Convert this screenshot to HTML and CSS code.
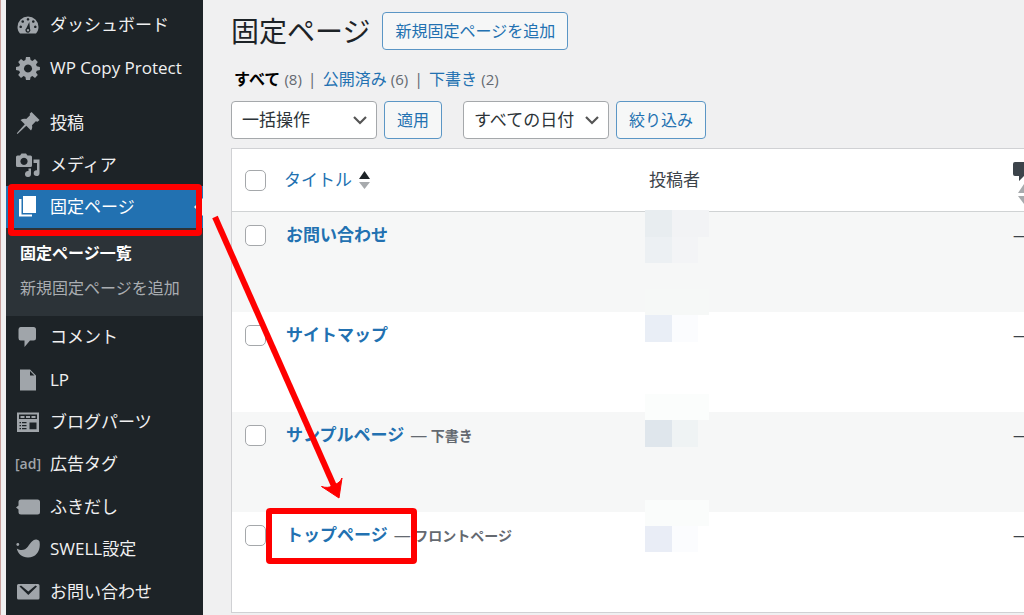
FILE: index.html
```html
<!DOCTYPE html>
<html lang="ja">
<head>
<meta charset="utf-8">
<title>固定ページ</title>
<link rel="stylesheet" href="styles.css">
</head>
<body>
<div class="app">
  <nav class="sidebar" aria-label="メインメニュー">
    <ul class="menu menu-top">
      <li><a class="item" href="#"><svg class="icon" viewBox="0 0 24 24"><path fill-rule="evenodd" d="M4 20.500C2.300 18.500 1.500 16.500 1.500 14A10.500 10.500 0 0 1 22.500 14C22.500 16.500 21.700 18.500 20 20.500ZM12 5a1.300 1.300 0 1 0 .01 0ZM6.700 7.200a1.300 1.300 0 1 0 .01 0ZM17.300 7.200a1.300 1.300 0 1 0 .01 0ZM4.700 12.500a1.300 1.300 0 1 0 .01 0ZM19.300 12.500a1.300 1.300 0 1 0 .01 0ZM13.300 9L10.300 15.200a2.500 2.500 0 1 0 3.700 .6ZM12 16a1.200 1.200 0 1 1-.01 0Z"/></svg>ダッシュボード</a></li>
      <li><a class="item" href="#"><svg class="icon" viewBox="0 0 24 24"><path fill-rule="evenodd" d="M10 1h4l.6 3.100 1.800.8 2.600-1.800L21.800 6l-1.800 2.600.8 1.700 3.100.6v3.200l-3.100.6-.8 1.800 1.800 2.600-2.800 2.800-2.600-1.800-1.800.8L14 24h-4l-.6-3.100-1.800-.8L5 21.900l-2.800-2.800L4 16.500l-.8-1.800L0 14.100v-3.200l3.200-.6.8-1.700L2.200 6 5 3.100l2.600 1.800 1.800-.8ZM12 8.500a4 4 0 1 0 .01 0Z"/></svg>WP Copy Protect</a></li>
    </ul>
    <ul class="menu menu-content">
      <li><a class="item" href="#"><svg class="icon" viewBox="0 0 24 24"><path d="M15.500 1L23.500 9 21.500 10.700 19.800 10.300 16 14.200C16.500 16.200 16.200 17.800 15 19.500L10.300 14.800 1.500 23 .8 22.300 8.800 13.300 4.500 9C6.500 7.800 8.200 7.600 10.200 8L14 4.300 13.700 2.800Z"/></svg>投稿</a></li>
      <li><a class="item" href="#"><svg class="icon" viewBox="0 0 24 24"><path fill-rule="evenodd" d="M1.500 2.500H4L5.500.5H10L11.500 2.500H14.500Q16 2.500 16 4V12.500Q16 14 14.500 14H1.500Q0 14 0 12.500V4Q0 2.500 1.500 2.500ZM8 4.800a3.600 3.600 0 1 0 .01 0Z"/><path d="M17.500 6.500H23.500V20A2.900 2.900 0 1 1 21 17.200V10H17.500ZM15 15.500V21A3 3 0 1 1 12.500 18V15.500Z"/></svg>メディア</a></li>
      <li class="current"><a class="item" href="#" aria-current="page"><svg class="icon" viewBox="0 0 24 24"><path d="M7 1H20V18H7Z"/><path d="M3 4H5.500V19.500H16V21.500H3Z"/></svg>固定ページ</a></li>
    </ul>
    <ul class="submenu">
      <li><a class="subitem active" href="#">固定ページ一覧</a></li>
      <li><a class="subitem" href="#">新規固定ページを追加</a></li>
    </ul>
    <ul class="menu menu-rest">
      <li><a class="item" href="#"><svg class="icon" viewBox="0 0 24 24"><path d="M4.500 2H17.500Q20 2 20 4.500V13Q20 15.500 17.500 15.500H14L8.500 22V15.500H4.500Q2.500 15.500 2.500 13V4.500Q2.500 2 4.500 2Z"/></svg>コメント</a></li>
      <li><a class="item" href="#"><svg class="icon" viewBox="0 0 24 24"><path fill-rule="evenodd" d="M4 1.500H14L20 7.500V22.500H4ZM14 3V7.500H18.500Z"/></svg>LP</a></li>
      <li><a class="item" href="#"><svg class="icon" viewBox="0 0 24 24"><path fill-rule="evenodd" d="M1 2.500H23V22H1ZM3 4.500V9H21V4.500ZM3.500 12V13.300H10.500V12ZM3.500 15V16.300H10.500V15ZM3.500 18V19.300H10.500V18ZM13.500 12.500V19.300H20.500V12.500Z"/><path d="M4.500 6H8.500V8H4.500ZM10 6H14V8H10ZM15.500 6H19.500V8H15.500ZM5 12H6V20H5Z"/></svg>ブログパーツ</a></li>
      <li><a class="item" href="#"><span class="icon icon-text">[ad]</span>広告タグ</a></li>
      <li><a class="item" href="#"><svg class="icon" viewBox="0 0 24 24"><path d="M5 4.500H21.500Q24 4.500 24 7V17Q24 19.500 21.500 19.500H5Q2.500 19.500 2.500 17V14.500L0 12.500 2.500 10.500V7Q2.500 4.500 5 4.500Z"/></svg>ふきだし</a></li>
      <li><a class="item" href="#"><svg class="icon" viewBox="0 0 24 24"><path d="M23.500 4.500C25 13 20.500 20.500 12 20.500C6 20.500 2 17 .8 11.500C5 14 9 13.500 12 9.500C15 5 17.500 2 20.500 2.500Q23 3 23.500 4.500Z"/><circle cx="1.800" cy="7.500" r="1.400"/></svg>SWELL設定</a></li>
      <li><a class="item" href="#"><svg class="icon" viewBox="0 0 24 24"><path fill-rule="evenodd" d="M2.500 4H22Q23.500 4 23.500 5.500V18Q23.500 19.500 22 19.500H2.500Q1 19.500 1 18V5.500Q1 4 2.500 4ZM3.500 6.500L12.300 15 21 6.500 19.500 5.500 12.300 11.500 5 5.500Z"/></svg>お問い合わせ</a></li>
    </ul>
  </nav>

  <main class="content">
    <header class="heading">
      <h1>固定ページ</h1>
      <a class="button" href="#">新規固定ページを追加</a>
    </header>
    <ul class="filters">
      <li><a class="all" href="#">すべて</a> <span class="count">(8)</span></li>
      <li><a href="#">公開済み</a> <span class="count">(6)</span></li>
      <li><a href="#">下書き</a> <span class="count">(2)</span></li>
    </ul>
    <form class="actions">
      <select aria-label="一括操作"><option>一括操作</option></select>
      <button class="button" type="button">適用</button>
      <select class="dates" aria-label="日付で絞り込む"><option>すべての日付</option></select>
      <button class="button" type="button">絞り込み</button>
    </form>
    <table class="pages">
      <colgroup><col class="col-check"><col class="col-title"><col><col class="col-comments"></colgroup>
      <thead>
        <tr>
          <th><input type="checkbox" aria-label="すべて選択"></th>
          <th><a class="sort" href="#">タイトル<svg class="sorter" viewBox="0 0 11 18"><path class="up" d="M5.500 0L11 8H0Z"/><path class="down" d="M0 11H11L5.500 18Z"/></svg></a></th>
          <th>投稿者</th>
          <th><svg class="bubble" viewBox="0 0 22 42" role="img" aria-label="コメント"><path class="talk" d="M2 0H20V14H11L6 19V14H2Q0 14 0 12V2Q0 0 2 0Z"/><path class="down" d="M11 22L17 31H5ZM5 34H17L11 42Z"/></svg></th>
        </tr>
      </thead>
      <tbody>
        <tr>
          <td><input type="checkbox" aria-label="お問い合わせを選択"></td>
          <td><a class="title" href="#">お問い合わせ</a></td>
          <td><svg class="mosaic" viewBox="0 0 64 106"><path fill="#e8edf0" d="M0 0H27V27H0Z"/><path fill="#f2f3f5" d="M27 0H64V27H27Z"/><path fill="#ecf0f3" d="M0 27H27V53H0Z"/><path fill="#f3f4f6" d="M27 27H53V53H27Z"/><path fill="#f6f8f7" d="M0 79H64V105H0Z"/></svg></td>
          <td>—</td>
        </tr>
        <tr>
          <td><input type="checkbox" aria-label="サイトマップを選択"></td>
          <td><a class="title" href="#">サイトマップ</a></td>
          <td><svg class="mosaic" viewBox="0 0 64 106"><path fill="#e9eef6" d="M0 3H27V30H0Z"/><path fill="#fbfcfe" d="M27 3H53V30H27Z"/><path fill="#fbfdfc" d="M0 82H64V106H0Z"/></svg></td>
          <td>—</td>
        </tr>
        <tr>
          <td><input type="checkbox" aria-label="サンプルページを選択"></td>
          <td><a class="title" href="#">サンプルページ</a><span class="state"><span class="dash">—</span> 下書き</span></td>
          <td><svg class="mosaic" viewBox="0 0 64 106"><path fill="#fbfdfc" d="M0 0H64V8H0Z"/><path fill="#dfe6ec" d="M0 8H27V35H0Z"/><path fill="#eff3f4" d="M27 8H53V35H27Z"/><path fill="#fafcfb" d="M0 88H64V106H0Z"/></svg></td>
          <td>—</td>
        </tr>
        <tr>
          <td><input type="checkbox" aria-label="トップページを選択"></td>
          <td><a class="title" href="#">トップページ</a><span class="state"><span class="dash">—</span> フロントページ</span></td>
          <td><svg class="mosaic" viewBox="0 0 64 106"><path fill="#fafcfb" d="M0 0H64V14H0Z"/><path fill="#e9edf6" d="M0 14H27V40H0Z"/><path fill="#fbfcfe" d="M27 14H53V40H27Z"/></svg></td>
          <td>—</td>
        </tr>
      </tbody>
    </table>
  </main>
  <svg class="annotations" width="430" height="580" viewBox="0 0 430 580" aria-hidden="true">
    <rect x="11" y="187" width="188" height="46" rx="1"/>
    <rect x="269" y="511" width="145" height="50" rx="1"/>
    <path d="M215 217L334 486"/>
    <path class="head" d="M339 498L321.500 486.500Q328 488.500 332 486L338 483Q341 481 342 478Z"/>
  </svg>
</div>
</body>
</html>
```
FILE: styles.css
```css
* { box-sizing: border-box; }
body {
  margin: 0;
  background: #f0f0f1;
  color: #3c434a;
  font: 16px/24px "Open Sans", "Noto Sans CJK JP", sans-serif;
}
ul, h1 { margin: 0; padding: 0; list-style: none; }
a { color: #2271b1; text-decoration: none; }

.app {
  position: relative;
  display: flex;
  height: 100vh;
  overflow: hidden;
  border-left: 1px solid #c9a09c;
}

/* Sidebar */
.sidebar {
  display: flex;
  flex-direction: column;
  flex: none;
  width: 197px;
  margin-left: 5px;
  background: #1d2327;
}
.menu-top { padding: 3px 0 12px; }
.menu-top .item { height: 43px; }
.item {
  display: flex;
  align-items: center;
  gap: 10px;
  height: 42px;
  padding-left: 10px;
  color: #f0f0f1;
  font-size: 17px;
  white-space: nowrap;
}
.icon { flex: none; width: 24px; height: 24px; fill: #a0a5aa; }
.icon-text {
  display: flex;
  align-items: center;
  justify-content: center;
  color: #a0a5aa;
  font-size: 14px;
  font-weight: 600;
}
.current { position: relative; background: #2271b1; }
.current .item { color: #fff; }
.current .icon { fill: #fff; }
.current::after {
  content: "";
  position: absolute;
  top: 12px;
  right: 0;
  border: 9px solid transparent;
  border-left: 0;
  border-right-color: #f0f0f1;
}
.menu-content { padding-top: 1px; }
.submenu {
  padding: 8px 0 10px;
  background: #2c3338;
}
.subitem {
  display: block;
  padding-left: 14px;
  color: #a9adb1;
  line-height: 35px;
  white-space: nowrap;
}
.subitem.active { color: #fff; font-weight: 700; }
.menu-rest {
  display: grid;
  flex: 1;
  grid-auto-rows: 1fr;
  padding-bottom: 2px;
}
.menu-rest li { display: grid; align-items: center; }

/* Page heading and filters */
.content {
  flex: 1;
  min-width: 0;
  padding: 12px 0 0 28px;
  overflow: hidden;
}
.heading { display: flex; align-items: center; gap: 12px; }
h1 {
  color: #1d2327;
  font-size: 28px;
  font-weight: 400;
  line-height: 36px;
}
.button {
  height: 38px;
  padding: 0 12px;
  border: 1px solid #5b96c5;
  border-radius: 4px;
  background: #f6f7f7;
  color: #2271b1;
  font: inherit;
  line-height: 36px;
  white-space: nowrap;
}
.filters {
  display: flex;
  padding: 17px 0 10px 3px;
  color: #646970;
}
.filters li + li::before { content: "|"; padding: 0 6px; }
.filters .all { color: #000; font-weight: 700; }
.count { font-size: 15px; }
.actions { display: flex; gap: 7px; }
select {
  appearance: none;
  width: 146px;
  height: 38px;
  padding: 0 10px;
  border: 1px solid #a5a8ab;
  border-radius: 4px;
  background: #fff url("data:image/svg+xml,%3Csvg xmlns='http://www.w3.org/2000/svg' width='14' height='9'%3E%3Cpath d='M1 1l6 6 6-6' fill='none' stroke='%23555' stroke-width='2.200'/%3E%3C/svg%3E") no-repeat right 9px center;
  color: #2c3338;
  font: 17px/36px "Open Sans", "Noto Sans CJK JP", sans-serif;
}
.dates { margin-left: 14px; }

/* Pages table */
.pages {
  width: calc(100% + 40px);
  margin-top: 9px;
  border: 1px solid #d0d1d4;
  border-collapse: separate;
  border-spacing: 0;
  table-layout: fixed;
  background: #fff;
}
.col-check { width: 44px; }
.col-title { width: 363px; }
.col-comments { width: 50px; }
th {
  height: 63px;
  padding: 0 10px;
  border-bottom: 1px solid #d0d3d4;
  font-size: 17px;
  font-weight: 400;
  text-align: left;
  vertical-align: middle;
}
td {
  height: 100px;
  padding: 11px 10px 0;
  vertical-align: top;
}
th:first-child, td:first-child { padding-right: 0; padding-left: 13px; }
td:first-child { padding-top: 13px; }
th:nth-child(2) { padding-left: 8px; }
th:last-child, td:last-child { padding-left: 0; }
th:last-child { padding-top: 6px; }
td:nth-child(3) { padding: 0 6px; }
tbody tr:nth-child(odd) { background: #f6f7f7; }
input[type="checkbox"] {
  appearance: none;
  display: block;
  width: 21px;
  height: 21px;
  margin: 0;
  border: 1px solid #a5a8ab;
  border-radius: 5px;
  background: #fff;
}
.sort { display: flex; align-items: center; gap: 7px; }
.sorter { width: 11px; height: 18px; }
.up { fill: #1d2327; }
.down { fill: #a7aaad; }
.talk { fill: #3c434a; }
.bubble { display: block; width: 22px; height: 42px; }
.title { font-size: 17px; font-weight: 700; }
.state { margin-left: 6px; color: #646970; font-size: 14px; font-weight: 700; }
.dash { font-size: 17px; font-weight: 400; }
.mosaic { display: block; width: 64px; height: 106px; margin-bottom: -6px; }
tbody tr:first-child .mosaic { margin-top: -2px; margin-bottom: -4px; }

/* Callout boxes and arrow drawn over the screen */
.annotations {
  position: absolute;
  top: 0;
  left: -1px;
  fill: none;
  stroke: #f00;
  stroke-width: 6;
  pointer-events: none;
}
.annotations .head { fill: #f00; stroke-width: 1; }
```
